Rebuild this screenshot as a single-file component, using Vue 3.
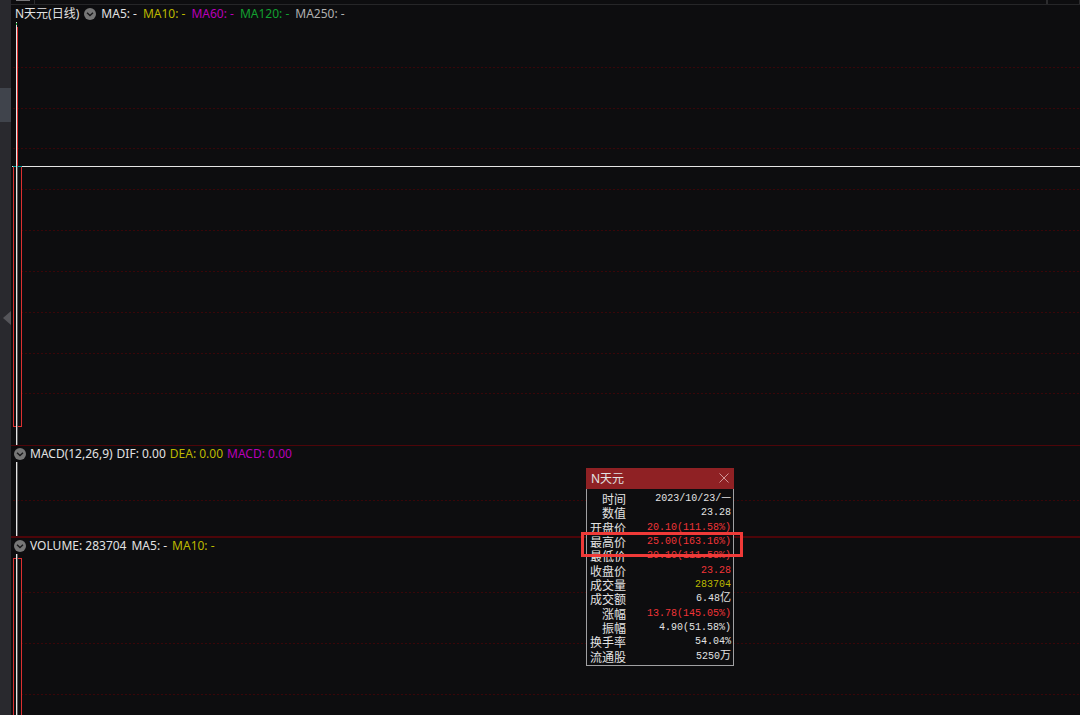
<script setup>
const mainGrid = [45, 86, 126, 167, 208, 249, 290, 331, 371]
const volumeGrid = [38, 89, 140]

const mainLegend = [
  { text: 'MA5: -', tone: 'white' },
  { text: 'MA10: -', tone: 'yellow' },
  { text: 'MA60: -', tone: 'magenta' },
  { text: 'MA120: -', tone: 'green' },
  { text: 'MA250: -', tone: 'grey' },
]
const macdLegend = [
  { text: 'MACD(12,26,9)', tone: 'white' },
  { text: 'DIF: 0.00', tone: 'white' },
  { text: 'DEA: 0.00', tone: 'yellow' },
  { text: 'MACD: 0.00', tone: 'magenta' },
]
const volumeLegend = [
  { text: 'VOLUME: 283704', tone: 'white' },
  { text: 'MA5: -', tone: 'white' },
  { text: 'MA10: -', tone: 'yellow' },
]

const quote = [
  { label: '时间', value: '2023/10/23/', unit: '—', tone: 'white' },
  { label: '数值', value: '23.28', tone: 'white' },
  { label: '开盘价', value: '20.10(111.58%)', tone: 'red' },
  { label: '最高价', value: '25.00(163.16%)', tone: 'red' },
  { label: '最低价', value: '20.10(111.58%)', tone: 'red' },
  { label: '收盘价', value: '23.28', tone: 'red' },
  { label: '成交量', value: '283704', tone: 'yellow' },
  { label: '成交额', value: '6.48', unit: '亿', tone: 'white' },
  { label: '涨幅', value: '13.78(145.05%)', tone: 'red' },
  { label: '振幅', value: '4.90(51.58%)', tone: 'white' },
  { label: '换手率', value: '54.04%', tone: 'white' },
  { label: '流通股', value: '5250', unit: '万', tone: 'white' },
]
</script>

<template>
  <div class="terminal">
    <aside class="rail">
      <div class="rail-thumb"></div>
      <button class="rail-toggle" type="button" aria-label="收起">
        <svg width="8" height="14" viewBox="0 0 8 14"><path d="M8 0V14L0 7Z" fill="#55555a" /></svg>
      </button>
    </aside>

    <main class="charts">
      <div class="strip">
        <span class="strip-tab"></span>
        <span class="strip-mark"></span>
        <span class="strip-fill"></span>
        <span class="strip-mark wide"></span>
        <span class="strip-gap"></span>
        <span class="strip-mark"></span>
      </div>

      <section class="pane price">
        <header class="legend">
          <span class="white">N天元(日线)</span>
          <button class="fold" type="button" aria-label="指标菜单">
            <svg width="12" height="12" viewBox="0 0 12 12">
              <circle cx="6" cy="6" r="6" fill="#777" />
              <path d="M3 4.8L6 7.6L9 4.8" fill="none" stroke="#19191b" stroke-width="1.4" />
            </svg>
          </button>
          <div class="series">
            <span v-for="item in mainLegend" :key="item.text" :class="item.tone">{{ item.text }}</span>
          </div>
        </header>
        <svg class="plot" width="100%" shape-rendering="crispEdges">
          <line v-for="y in mainGrid" :key="y" class="grid" x1="2" x2="100%" :y1="y + 0.5" :y2="y + 0.5" />
          <rect x="2" y="144" width="9" height="261" class="candle-fill" />
          <path d="M2.5 144V404.5H10.5V144" class="candle" />
          <rect x="6" y="5" width="1" height="139" fill="#e03030" />
          <rect x="1" y="144" width="100%" height="1" fill="#e4e4e4" />
          <rect x="2" y="144" width="9" height="1" fill="#009c9c" />
          <rect x="5" y="0" width="1" height="100%" fill="#e4e4e4" />
          <rect x="6" y="144" width="1" height="100%" fill="#58585a" />
          <rect x="5" y="1" width="1" height="2" fill="#18a035" />
        </svg>
      </section>

      <section class="pane macd">
        <header class="legend">
          <button class="fold" type="button" aria-label="MACD 菜单">
            <svg width="12" height="12" viewBox="0 0 12 12">
              <circle cx="6" cy="6" r="6" fill="#777" />
              <path d="M3 4.8L6 7.6L9 4.8" fill="none" stroke="#19191b" stroke-width="1.4" />
            </svg>
          </button>
          <div class="series">
            <span v-for="item in macdLegend" :key="item.text" :class="item.tone">{{ item.text }}</span>
          </div>
        </header>
        <svg class="plot" width="100%" shape-rendering="crispEdges">
          <line class="grid" x1="2" x2="100%" y1="38.5" y2="38.5" />
          <rect x="5" y="0" width="1" height="100%" fill="#e4e4e4" />
          <rect x="6" y="0" width="1" height="100%" fill="#58585a" />
        </svg>
      </section>

      <section class="pane volume">
        <header class="legend">
          <button class="fold" type="button" aria-label="成交量菜单">
            <svg width="12" height="12" viewBox="0 0 12 12">
              <circle cx="6" cy="6" r="6" fill="#777" />
              <path d="M3 4.8L6 7.6L9 4.8" fill="none" stroke="#19191b" stroke-width="1.4" />
            </svg>
          </button>
          <div class="series">
            <span v-for="item in volumeLegend" :key="item.text" :class="item.tone">{{ item.text }}</span>
          </div>
        </header>
        <svg class="plot" width="100%" shape-rendering="crispEdges">
          <line v-for="y in volumeGrid" :key="y" class="grid" x1="2" x2="100%" :y1="y + 0.5" :y2="y + 0.5" />
          <rect x="2" y="4" width="9" height="100%" class="candle-fill" />
          <rect x="2.5" y="4.5" width="8" height="100%" class="candle" />
          <rect x="5" y="0" width="1" height="100%" fill="#e4e4e4" />
          <rect x="6" y="0" width="1" height="100%" fill="#58585a" />
        </svg>
      </section>

      <div class="quote">
        <div class="quote-head">
          <span>N天元</span>
          <button class="close" type="button" aria-label="关闭">
            <svg width="10" height="10" viewBox="0 0 10 10">
              <path d="M0.5 0.5L9.5 9.5M9.5 0.5L0.5 9.5" stroke="#d09496" stroke-width="1" />
            </svg>
          </button>
        </div>
        <div class="quote-body">
          <table>
            <tbody>
              <tr v-for="row in quote" :key="row.label">
                <th scope="row">{{ row.label }}</th>
                <td :class="row.tone">{{ row.value }}<span v-if="row.unit" class="unit">{{ row.unit }}</span></td>
              </tr>
            </tbody>
          </table>
        </div>
        <div class="highlight"></div>
      </div>
    </main>
  </div>
</template>

<style>
body {
  background: #0d0d0f;
}
</style>

<style scoped>
.terminal {
  display: flex;
  min-height: 100vh;
  background: #0d0d0f;
  color: #e2e2e2;
  font-family: "Noto Sans", "Noto Sans CJK SC", sans-serif;
  font-size: 12px;
  overflow: hidden;
}
button {
  display: flex;
  padding: 0;
  border: 0;
  background: none;
  cursor: pointer;
}
.rail {
  position: relative;
  flex: none;
  width: 11px;
  background: #29292e;
}
.rail-thumb {
  height: 34px;
  margin-top: 88px;
  background: #40444c;
}
.rail-toggle {
  position: absolute;
  right: 0;
  top: 311px;
}
.charts {
  position: relative;
  flex: 1;
  min-width: 0;
  display: flex;
  flex-direction: column;
}
.strip {
  display: flex;
  flex: none;
  height: 4px;
  border-bottom: 1px solid #262628;
}
.strip-tab {
  width: 14px;
  height: 1px;
  margin: 0 4px 0 5px;
  background: #77777a;
}
.strip-mark {
  width: 1px;
  background: #2c2c2e;
}
.strip-mark.wide {
  width: 2px;
}
.strip-fill {
  flex: 1;
}
.strip-gap {
  width: 31px;
}
.pane {
  display: flex;
  flex-direction: column;
  min-height: 0;
}
.price {
  flex: 440 0 0;
}
.macd {
  flex: 90 0 0;
  border-top: 1px solid #4d0509;
}
.volume {
  flex: 177 0 0;
  border-top: 2px solid #4d0509;
}
.legend {
  display: flex;
  align-items: center;
  flex: none;
  height: 16px;
  padding-left: 3px;
  gap: 4px;
  line-height: 16px;
  white-space: nowrap;
}
.price .legend {
  height: 17px;
  padding-left: 4px;
  gap: 5px;
}
.series {
  display: flex;
  gap: 5px;
}
.price .series {
  gap: 6px;
}
.macd .series {
  gap: 4px;
}
.fold {
  flex: none;
}
.plot {
  display: block;
  flex: 1;
  min-height: 0;
}
.grid {
  stroke: #3a0609;
  stroke-dasharray: 2 2;
}
.candle {
  fill: none;
  stroke: #dc3030;
}
.candle-fill {
  fill: #0d0d0f;
}
.white {
  color: #e2e2e2;
}
.yellow {
  color: #bcb800;
}
.magenta {
  color: #b800b8;
}
.green {
  color: #12a030;
}
.grey {
  color: #b0b0b0;
}
.red {
  color: #f03438;
}
.quote {
  position: absolute;
  left: 575px;
  top: 468px;
  width: 148px;
}
.quote-head {
  display: flex;
  align-items: center;
  justify-content: space-between;
  box-sizing: border-box;
  height: 21px;
  padding: 0 5px 2px;
  background: #8f2124;
}
.quote-body {
  padding: 3px 2px 1px 3px;
  border: 1px solid #a0a0a2;
  border-top: 0;
  background: #0d0d0f;
}
table {
  width: 100%;
  height: 172px;
  border-collapse: collapse;
  line-height: 12px;
}
th,
td {
  padding: 0;
  white-space: nowrap;
}
th {
  width: 36px;
  font-family: "Noto Sans CJK SC", sans-serif;
  font-weight: 400;
  text-align: right;
}
td {
  font-family: "Liberation Mono", "Noto Sans CJK SC", monospace;
  font-size: 10px;
  text-align: right;
}
.unit {
  font-family: "Noto Sans CJK SC", sans-serif;
  font-size: 11px;
  line-height: 1px;
}
.highlight {
  position: absolute;
  left: -5px;
  right: -9px;
  top: 64px;
  height: 19px;
  border: 3px solid #f03a38;
}
</style>
